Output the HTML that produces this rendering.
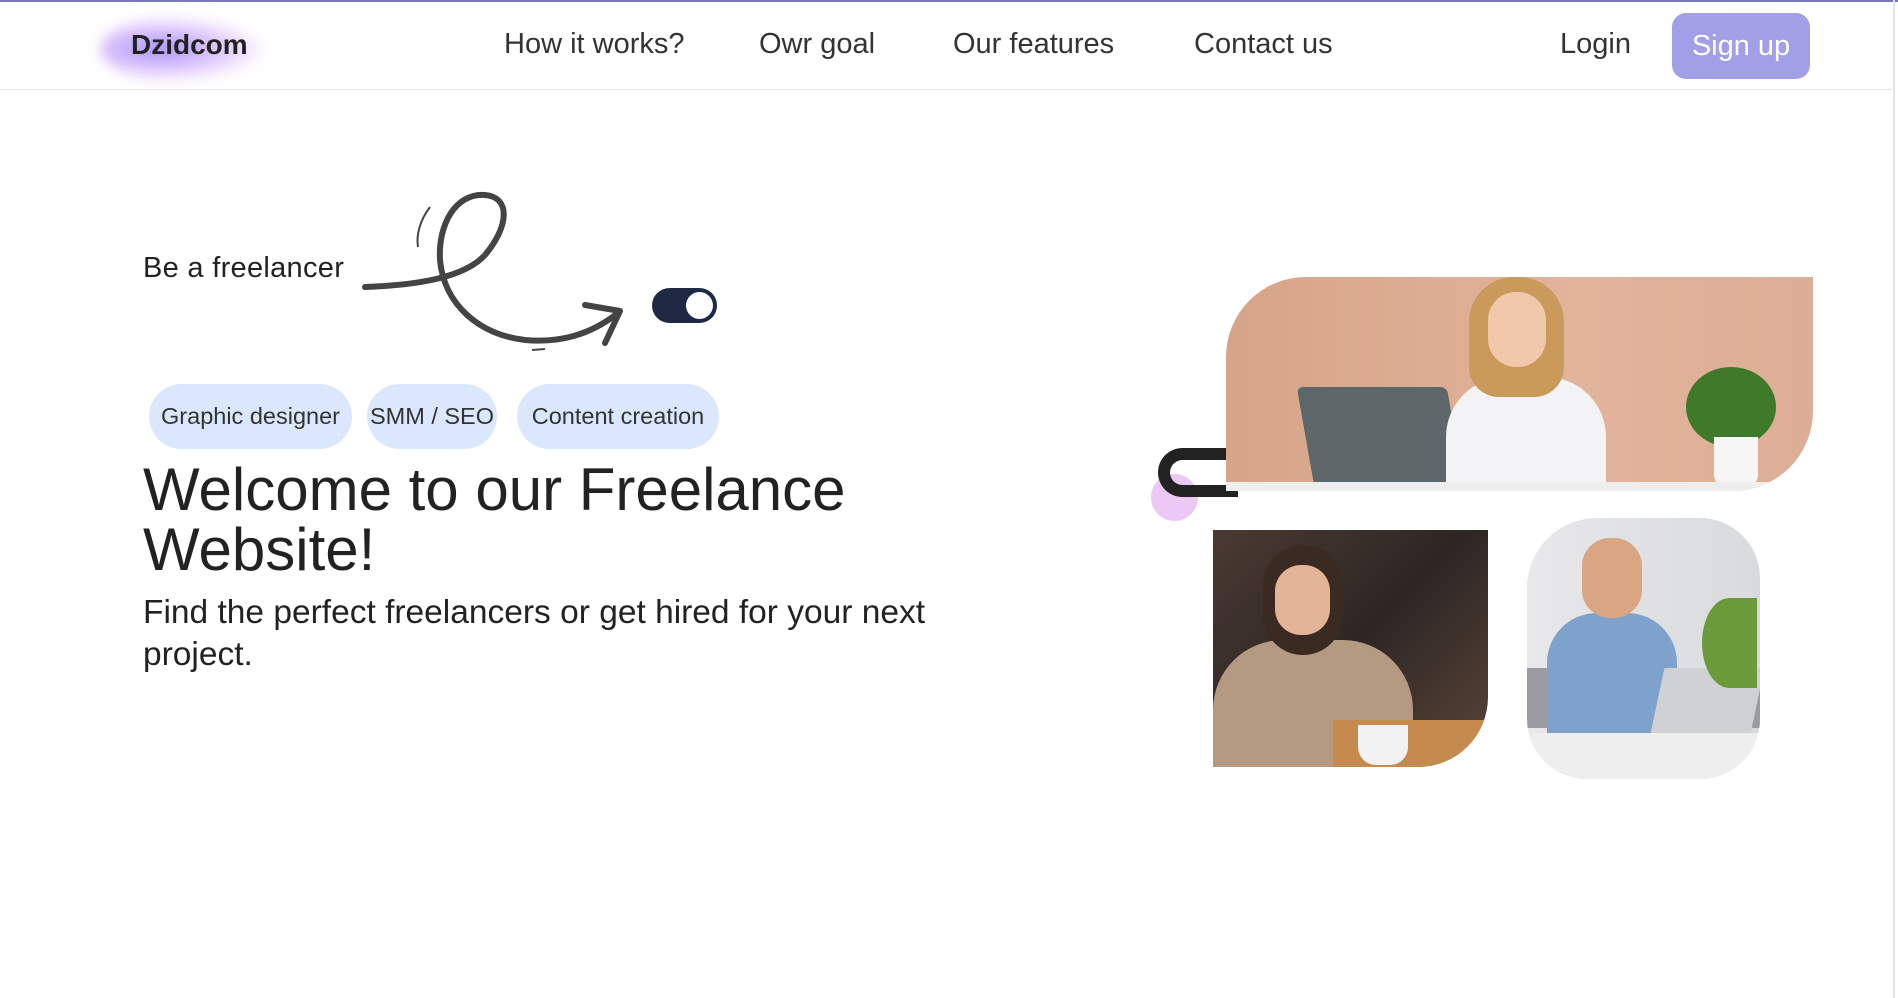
<!DOCTYPE html>
<html><head><meta charset="utf-8"><style>
*{margin:0;padding:0;box-sizing:border-box}
body{width:1898px;height:998px;overflow:hidden;background:#fff;font-family:"Liberation Sans",sans-serif;color:#222;position:relative}
.topline{position:absolute;left:0;top:0;width:100%;height:2px;background:#7b78b8}
.nav{position:absolute;left:0;top:0;width:1892px;height:90px;border-bottom:1px solid #e6e6e6}
.logo{position:absolute;left:131px;top:29px;font-weight:bold;font-size:28px;color:#222;z-index:2}
.blob{position:absolute;left:100px;top:14px;width:170px;height:70px;border-radius:50%;background:radial-gradient(ellipse at 35% 50%,rgba(140,110,250,.75),rgba(200,150,250,.45) 45%,rgba(255,255,255,0) 70%);filter:blur(6px)}
.nl{position:absolute;top:28px;font-size:29px;color:#333}
.btn{position:absolute;left:1672px;top:13px;width:138px;height:66px;border-radius:14px;background:#a19fe6;color:#fff;font-size:29px;text-align:center;line-height:66px}
.scroll{position:absolute;right:3px;top:0;width:2px;height:998px;background:#e4e4e4}
.bf{position:absolute;left:143px;top:252px;font-size:29px;letter-spacing:.3px;color:#222}
.tog{position:absolute;left:652px;top:288px;width:65px;height:35px;border-radius:18px;background:#1e2a44}
.tog:after{content:"";position:absolute;right:4px;top:4px;width:27px;height:27px;border-radius:50%;background:#fff}
.chip{position:absolute;top:384px;height:65px;border-radius:33px;background:#dbe7fd;font-size:23.5px;color:#333;line-height:65px;text-align:center;white-space:nowrap}
h1{position:absolute;left:143px;top:460px;font-size:60px;font-weight:normal;line-height:60px;color:#222;width:900px}
p.sub{position:absolute;left:143px;top:592px;font-size:33.5px;line-height:42px;color:#222;width:900px}
.img{position:absolute;overflow:hidden}
</style></head><body>
<div class="topline"></div>
<div class="nav">
<div class="blob"></div>
<div class="logo">Dzidcom</div>
<div class="nl" style="left:504px">How it works?</div>
<div class="nl" style="left:759px">Owr goal</div>
<div class="nl" style="left:953px">Our features</div>
<div class="nl" style="left:1194px">Contact us</div>
<div class="nl" style="left:1560px">Login</div>
<div class="btn">Sign up</div>
</div>
<div class="scroll"></div>
<div class="bf">Be a freelancer</div>
<svg style="position:absolute;left:360px;top:185px" width="270" height="170" viewBox="0 0 270 170">
<path d="M5 102 C60 100 105 92 125 70 C150 40 150 12 125 10 C95 8 78 40 80 75 C84 120 120 150 165 155 C200 158 230 150 258 128" fill="none" stroke="#444" stroke-width="6" stroke-linecap="round"/>
<path d="M225 120 L260 126 L245 158" fill="none" stroke="#444" stroke-width="6" stroke-linecap="round" stroke-linejoin="round"/>
<path d="M70 22 C60 35 56 50 58 62" fill="none" stroke="#444" stroke-width="2"/>
<path d="M172 165 L185 164" stroke="#444" stroke-width="2"/>
</svg>
<div class="tog"></div>
<div class="chip" style="left:149px;width:203px">Graphic designer</div>
<div class="chip" style="left:367px;width:130px">SMM / SEO</div>
<div class="chip" style="left:517px;width:202px">Content creation</div>
<h1>Welcome to our Freelance<br>Website!</h1>
<p class="sub">Find the perfect freelancers or get hired for your next<br>project.</p>

<div style="position:absolute;left:1151px;top:474px;width:47px;height:47px;border-radius:50%;background:#ecc8f5"></div>
<div style="position:absolute;left:1158px;top:448px;width:80px;height:49px;border:12px solid #222;border-right:none;border-radius:25px 0 0 25px"></div>

<div class="img" style="left:1226px;top:277px;width:587px;height:214px;border-radius:80px 0 80px 0;background:linear-gradient(90deg,#d6a488,#e2b49b 60%,#dcae95)">
<div style="position:absolute;left:80px;top:110px;width:150px;height:105px;background:#5d6668;transform:skewX(10deg);border-radius:6px"></div>
<div style="position:absolute;left:220px;top:100px;width:160px;height:114px;background:#f3f2f4;border-radius:60px 60px 0 0"></div>
<div style="position:absolute;left:243px;top:0;width:95px;height:120px;background:#c99a5a;border-radius:45px 45px 30px 30px"></div>
<div style="position:absolute;left:262px;top:15px;width:58px;height:75px;background:#f0c9ac;border-radius:28px"></div>
<div style="position:absolute;left:460px;top:90px;width:90px;height:80px;background:#3f7a2a;border-radius:50%"></div>
<div style="position:absolute;left:488px;top:160px;width:44px;height:50px;background:#f6f6f6;border-radius:0 0 12px 12px"></div>
<div style="position:absolute;left:0;top:205px;width:587px;height:9px;background:#eee"></div>
</div>

<div class="img" style="left:1213px;top:530px;width:275px;height:237px;border-radius:0 0 70px 0;background:linear-gradient(135deg,#4a3a32,#2e2624 50%,#5a4538)">
<div style="position:absolute;left:0;top:110px;width:200px;height:127px;background:#b49a82;border-radius:70px 70px 0 0"></div>
<div style="position:absolute;left:50px;top:15px;width:80px;height:110px;background:#3a2a22;border-radius:40px"></div>
<div style="position:absolute;left:62px;top:35px;width:55px;height:70px;background:#e2b598;border-radius:26px"></div>
<div style="position:absolute;left:120px;top:190px;width:155px;height:47px;background:#c48a4e"></div>
<div style="position:absolute;left:145px;top:195px;width:50px;height:40px;background:#f2f2f2;border-radius:0 0 18px 18px"></div>
</div>

<div class="img" style="left:1527px;top:518px;width:233px;height:261px;border-radius:70px 60px 60px 60px;background:linear-gradient(90deg,#e8e8ea,#d8dadc)">
<div style="position:absolute;left:0;top:150px;width:233px;height:60px;background:#9a9ca0"></div>
<div style="position:absolute;left:20px;top:95px;width:130px;height:130px;background:#7fa2cc;border-radius:50px 50px 10px 10px"></div>
<div style="position:absolute;left:55px;top:20px;width:60px;height:80px;background:#d9a582;border-radius:28px"></div>
<div style="position:absolute;left:130px;top:150px;width:100px;height:70px;background:#cfd1d3;transform:skewX(-12deg)"></div>
<div style="position:absolute;left:0;top:215px;width:233px;height:46px;background:#eeeeee"></div>
<div style="position:absolute;left:175px;top:80px;width:55px;height:90px;background:#6b9a3a;border-radius:50% 0 0 50%"></div>
</div>
</body></html>
